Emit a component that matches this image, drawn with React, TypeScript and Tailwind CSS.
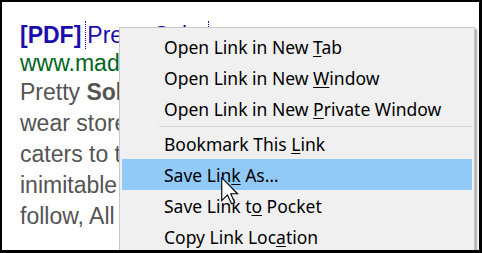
import React from "react";

type Item = { pre: string; key: string; post: string; active?: boolean };

const items1: Item[] = [
  { pre: "Open Link in New ", key: "T", post: "ab" },
  { pre: "Open Link in New ", key: "W", post: "indow" },
  { pre: "Open Link in New ", key: "P", post: "rivate Window" },
];
const items2: Item[] = [
  { pre: "Bookmark This ", key: "L", post: "ink" },
  { pre: "Save Lin", key: "k", post: " As…", active: true },
  { pre: "Save Link t", key: "o", post: " Pocket" },
  { pre: "Copy Link Loc", key: "a", post: "tion" },
];

function MenuRow({ it }: { it: Item }) {
  return (
    <div
      className={
        "mx-[2px] h-[31px] flex items-center pl-[42px] pt-[2px] whitespace-nowrap " +
        (it.active ? "bg-[#91c9f7]" : "")
      }
    >
      <span>
        {it.pre}
        <span className="underline underline-offset-[2px] decoration-1">{it.key}</span>
        {it.post}
      </span>
    </div>
  );
}

function Cursor() {
  return (
    <svg
      className="absolute left-[219px] top-[175px]"
      width="18"
      height="28"
      viewBox="0 0 12.5 19.5"
    >
      <polygon
        points="0.5,0.5 0.5,16.5 4.5,12.5 7.3,18.7 9.5,17.7 6.8,11.7 11.5,11.7"
        fill="#ffffff"
        stroke="#000000"
        strokeWidth="0.8"
        strokeLinejoin="miter"
      />
    </svg>
  );
}

export default function App() {
  return (
    <div className="w-[482px] h-[253px] bg-black pt-[2px] pl-[2px] pr-[3px] pb-[3px]">
      <div
        className="relative w-full h-full bg-white overflow-hidden pl-[18px] pt-[19px]"
        style={{ fontFamily: "Arial, 'Liberation Sans', sans-serif" }}
      >
        <div className="h-[28px] leading-[28px] text-[23px] whitespace-nowrap text-[#1a0dab] flex items-center">
          <span className="font-bold">[PDF]</span>
          <span className="ml-[4px] inline-block w-[124px] h-[28px] overflow-hidden border-l border-r border-dotted border-[#1a0dab]">
            <span className="pl-[1px]">Pretty Soles</span>
          </span>
        </div>
        <div className="h-[28px] leading-[28px] text-[23px] whitespace-nowrap text-[#006621]">
          www.madisonavenue.com/pretty-soles.pdf
        </div>
        <div className="leading-[31px] text-[23px] text-[#545454] whitespace-nowrap">
          <div>
            Pretty <span className="font-bold">So</span>les is a luxury shoe and foot
          </div>
          <div>wear store in Madison Avenue which proudly</div>
          <div>caters to the fashion needs of the most</div>
          <div>inimitable women in the city who never</div>
          <div>follow, All the styles are handpicked</div>
        </div>

        <div
          className="absolute left-[117px] top-[25px] w-[356px] h-[260px] bg-[#f0f0f0] border border-[#c9c9c9] pt-[3px] text-black text-[17.5px] shadow-[2px_2px_2px_rgba(0,0,0,0.35)]"
          style={{ fontFamily: "'Segoe UI', 'Noto Sans', 'Open Sans', sans-serif" }}
        >
          {items1.map((it, i) => (
            <MenuRow key={i} it={it} />
          ))}
          <div className="h-[4px] flex items-center">
            <div className="ml-[39px] mr-[2px] flex-1 h-px bg-[#d5d5d5]" />
          </div>
          {items2.map((it, i) => (
            <MenuRow key={i} it={it} />
          ))}
        </div>
        <Cursor />
      </div>
    </div>
  );
}
